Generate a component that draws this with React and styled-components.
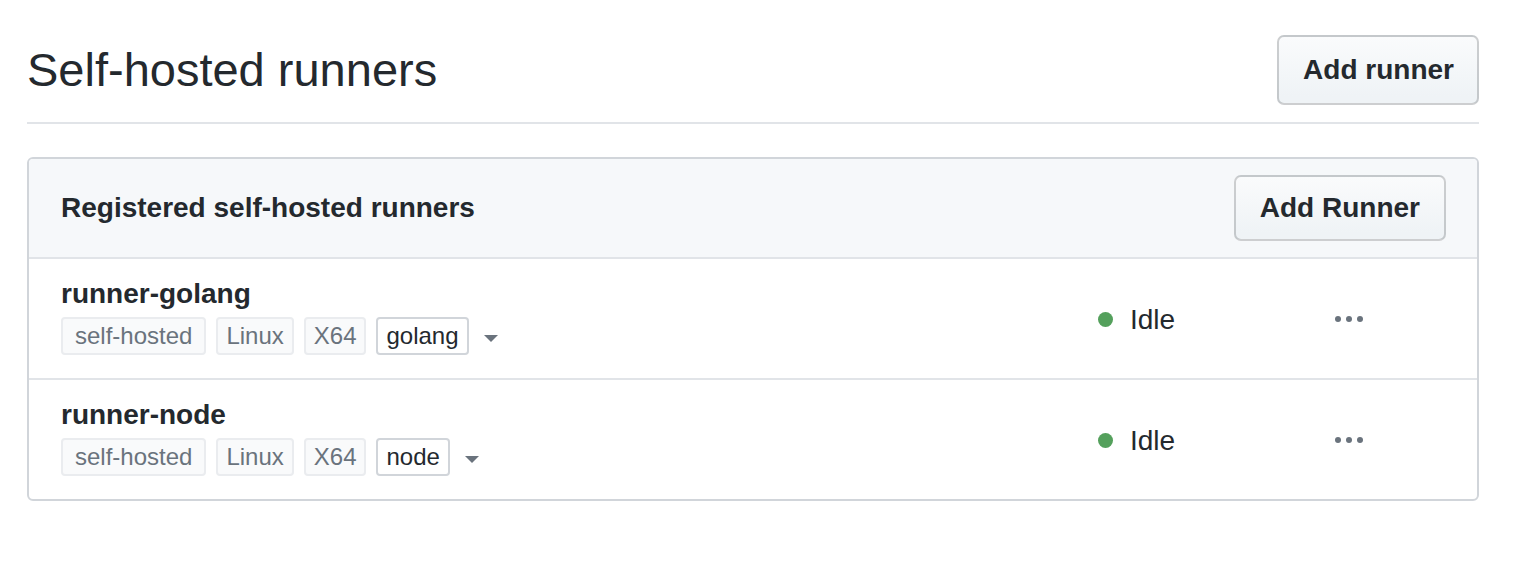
import React from "react";
import styled, { createGlobalStyle } from "styled-components";

const GlobalStyle = createGlobalStyle`
  html, body {
    margin: 0;
    padding: 0;
    background: #ffffff;
  }
  body {
    font-family: "Liberation Sans", Arial, Helvetica, sans-serif;
    color: #24292e;
    -webkit-font-smoothing: antialiased;
  }
  * { box-sizing: border-box; }
`;

const Page = styled.div`
  padding: 35px 39px 40px 27px;
`;

const Subhead = styled.div`
  display: flex;
  align-items: center;
  justify-content: space-between;
  padding-bottom: 17px;
  border-bottom: 2px solid #e1e4e8;
`;

const Title = styled.h2`
  margin: 0;
  font-size: 47px;
  font-weight: 400;
  line-height: 1.2;
  color: #24292e;
`;

const Button = styled.button`
  font-family: inherit;
  font-size: 28px;
  font-weight: 700;
  line-height: 40px;
  color: #24292e;
  padding: ${(p) => (p.$small ? "11px 24px 11px 24px" : "13px 23px 13px 24px")};
  min-height: ${(p) => (p.$small ? "66px" : "70px")};
  background-image: linear-gradient(-180deg, #fafbfc 0%, #eff3f6 90%);
  background-color: #eff3f6;
  border: 2px solid rgba(27, 31, 35, 0.2);
  border-radius: 7px;
  white-space: nowrap;
  cursor: pointer;
`;

const Box = styled.div`
  margin-top: 33px;
  border: 2px solid #d1d5da;
  border-radius: 6px;
  overflow: hidden;
`;

const BoxHeader = styled.div`
  display: flex;
  align-items: center;
  justify-content: space-between;
  padding: 16px 31px 16px 32px;
  background: #f6f8fa;
  border-bottom: 2px solid #e1e4e8;
`;

const BoxTitle = styled.h3`
  margin: 0;
  font-size: 28px;
  font-weight: 700;
  line-height: 1.4;
`;

const Row = styled.div`
  display: grid;
  grid-template-columns: 1fr 237px 110px;
  align-items: center;
  padding: 17px 32px 23px 32px;
  & + & {
    border-top: 2px solid #e1e4e8;
  }
`;

const RunnerInfo = styled.div`
  display: flex;
  flex-direction: column;
  gap: 5px;
`;

const RunnerName = styled.div`
  font-size: 28px;
  font-weight: 700;
  line-height: 36px;
`;

const Labels = styled.div`
  display: flex;
  align-items: center;
  gap: 10px;
`;

const Label = styled.span`
  display: inline-block;
  font-size: 24px;
  line-height: 34px;
  padding: 0 ${(p) => (p.$wide ? "12px" : "8px")};
  border-radius: 4px;
  border: 2px solid ${(p) => (p.$custom ? "#d1d5da" : "#eaecef")};
  background: ${(p) => (p.$custom ? "#ffffff" : "#f9fafb")};
  color: ${(p) => (p.$custom ? "#24292e" : "#6a737d")};
`;

const Caret = styled.span`
  display: inline-block;
  margin-left: 5px;
  width: 0;
  height: 0;
  border-left: 7px solid transparent;
  border-right: 7px solid transparent;
  border-top: 7px solid #6a737d;
  margin-top: 4px;
`;

const Status = styled.div`
  display: flex;
  align-items: center;
  gap: 17px;
  font-size: 28px;
  line-height: 36px;
  margin-top: 8px;
`;

const Dot = styled.span`
  width: 15px;
  height: 15px;
  border-radius: 50%;
  background: #54a05c;
`;

const Kebab = styled.button`
  display: flex;
  gap: 5px;
  align-items: center;
  justify-self: start;
  padding: 0;
  border: 0;
  background: transparent;
  margin-top: 6px;
  cursor: pointer;
`;

const KebabDot = styled.span`
  width: 6px;
  height: 6px;
  border-radius: 50%;
  background: #6a737d;
`;

const runners = [
  { name: "runner-golang", labels: ["self-hosted", "Linux", "X64"], custom: "golang" },
  { name: "runner-node", labels: ["self-hosted", "Linux", "X64"], custom: "node" },
];

export default function App() {
  return (
    <Page>
      <GlobalStyle />
      <Subhead>
        <Title>Self-hosted runners</Title>
        <Button>Add runner</Button>
      </Subhead>
      <Box>
        <BoxHeader>
          <BoxTitle>Registered self-hosted runners</BoxTitle>
          <Button $small>Add Runner</Button>
        </BoxHeader>
        {runners.map((r) => (
          <Row key={r.name}>
            <RunnerInfo>
              <RunnerName>{r.name}</RunnerName>
              <Labels>
                {r.labels.map((l) => (
                  <Label key={l} $wide={l === "self-hosted"}>
                    {l}
                  </Label>
                ))}
                <Label $custom>{r.custom}</Label>
                <Caret />
              </Labels>
            </RunnerInfo>
            <Status>
              <Dot />
              Idle
            </Status>
            <Kebab aria-label="More">
              <KebabDot />
              <KebabDot />
              <KebabDot />
            </Kebab>
          </Row>
        ))}
      </Box>
    </Page>
  );
}
